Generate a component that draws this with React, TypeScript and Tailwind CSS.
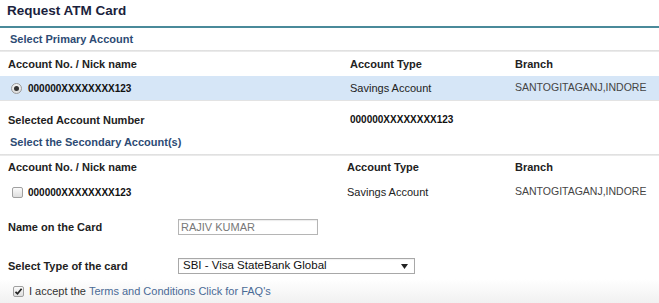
import React from "react";

const Radio = () => (
  <span className="inline-flex w-[11px] h-[11px] rounded-full border border-[#9a9a9a] bg-gradient-to-b from-[#f4f4f4] to-[#dcdcdc] items-center justify-center mr-[6px]">
    <span className="w-[5px] h-[5px] rounded-full bg-[#333]" />
  </span>
);

const Check = ({ checked }: { checked?: boolean }) => (
  <span className="inline-flex w-[11px] h-[11px] rounded-[2px] border border-[#a0a0a0] bg-gradient-to-b from-[#fbfbfb] to-[#dedede] items-center justify-center mr-[5px]">
    {checked && (
      <svg width="9" height="9" viewBox="0 0 9 9">
        <path d="M1.5 4.8 L3.5 6.8 L7.6 1.8" stroke="#222" strokeWidth="1.7" fill="none" />
      </svg>
    )}
  </span>
);

export default function App() {
  return (
    <div className="w-[659px] h-[303px] bg-white overflow-hidden font-['Liberation_Sans',Arial,sans-serif] text-[11px] text-[#222] flex flex-col">
      <div className="h-[26px] pl-[7px] pt-[3px] leading-[15px] text-[13.5px] font-bold text-[#1b1f3d]">Request ATM Card</div>
      <div className="h-[2px] bg-[#4a8a9a]" />
      <div className="h-[22px] flex items-center pl-[10px] font-bold text-[#2d4b74]">Select Primary Account</div>
      <div className="h-[2px] bg-gradient-to-b from-[#dcdcdc] to-[#efefef]" />
      <div className="h-[24px] flex items-center font-bold">
        <div className="w-[350px] pl-[8px]">Account No. / Nick name</div>
        <div className="w-[165px]">Account Type</div>
        <div>Branch</div>
      </div>
      <div className="h-[24px] flex items-center bg-[#d6e6f7]">
        <div className="w-[350px] pl-[11px] flex items-center font-bold text-[10px] text-[#111]">
          <Radio />
          000000XXXXXXXX123
        </div>
        <div className="w-[165px]">Savings Account</div>
        <div className="text-[#444] text-[10.5px] whitespace-nowrap">SANTOGITAGANJ,INDORE</div>
      </div>
      <div className="h-[1px] bg-[#e3e3e3]" />
      <div className="pt-[12px] pb-[4px] leading-[14px] flex font-bold">
        <div className="w-[350px] pl-[8px]">Selected Account Number</div>
        <div className="text-[10px] text-[#111]">000000XXXXXXXX123</div>
      </div>
      <div className="pt-[4px] pb-[5px] leading-[14px] pl-[10px] font-bold text-[#2d4b74]">Select the Secondary Account(s)</div>
      <div className="h-[2px] bg-gradient-to-b from-[#dcdcdc] to-[#efefef]" />
      <div className="h-[23px] flex items-center font-bold">
        <div className="w-[347px] pl-[8px]">Account No. / Nick name</div>
        <div className="w-[168px]">Account Type</div>
        <div>Branch</div>
      </div>
      <div className="h-[26px] flex items-center">
        <div className="w-[347px] pl-[12px] flex items-center font-bold text-[10px] text-[#111]">
          <Check />
          000000XXXXXXXX123
        </div>
        <div className="w-[168px]">Savings Account</div>
        <div className="text-[#444] text-[10.5px] whitespace-nowrap">SANTOGITAGANJ,INDORE</div>
      </div>
      <div className="mt-[14px] h-[16px] flex items-center">
        <div className="w-[178px] pl-[8px] font-bold">Name on the Card</div>
        <div className="w-[140px] h-[16px] border border-[#b5b5b5] shadow-[inset_0_1px_1px_rgba(0,0,0,0.08)] pl-[2px] flex items-center text-[#777] text-[11px]">RAJIV KUMAR</div>
      </div>
      <div className="mt-[23px] h-[16px] flex items-center">
        <div className="w-[178px] pl-[8px] font-bold">Select Type of the card</div>
        <div className="w-[237px] h-[16px] border border-[#a8a8a8] shadow-[inset_0_1px_1px_rgba(0,0,0,0.06)] pl-[4px] pr-[6px] flex items-center justify-between text-[11.5px] text-[#111]">
          <span>SBI - Visa StateBank Global</span>
          <svg width="7" height="5" viewBox="0 0 7 5"><path d="M0 0 H7 L3.5 5 Z" fill="#222" /></svg>
        </div>
      </div>
      <div className="mt-[5px] flex-1 bg-gradient-to-b from-white to-[#f1f1f1] pt-[6px] pl-[13px] flex items-start">
        <div className="flex items-center h-[12px]">
          <Check checked />
          <span className="text-[#333]">I accept the&nbsp;</span>
          <span className="text-[#4a6a96]">Terms and Conditions Click for FAQ's</span>
        </div>
      </div>
    </div>
  );
}
